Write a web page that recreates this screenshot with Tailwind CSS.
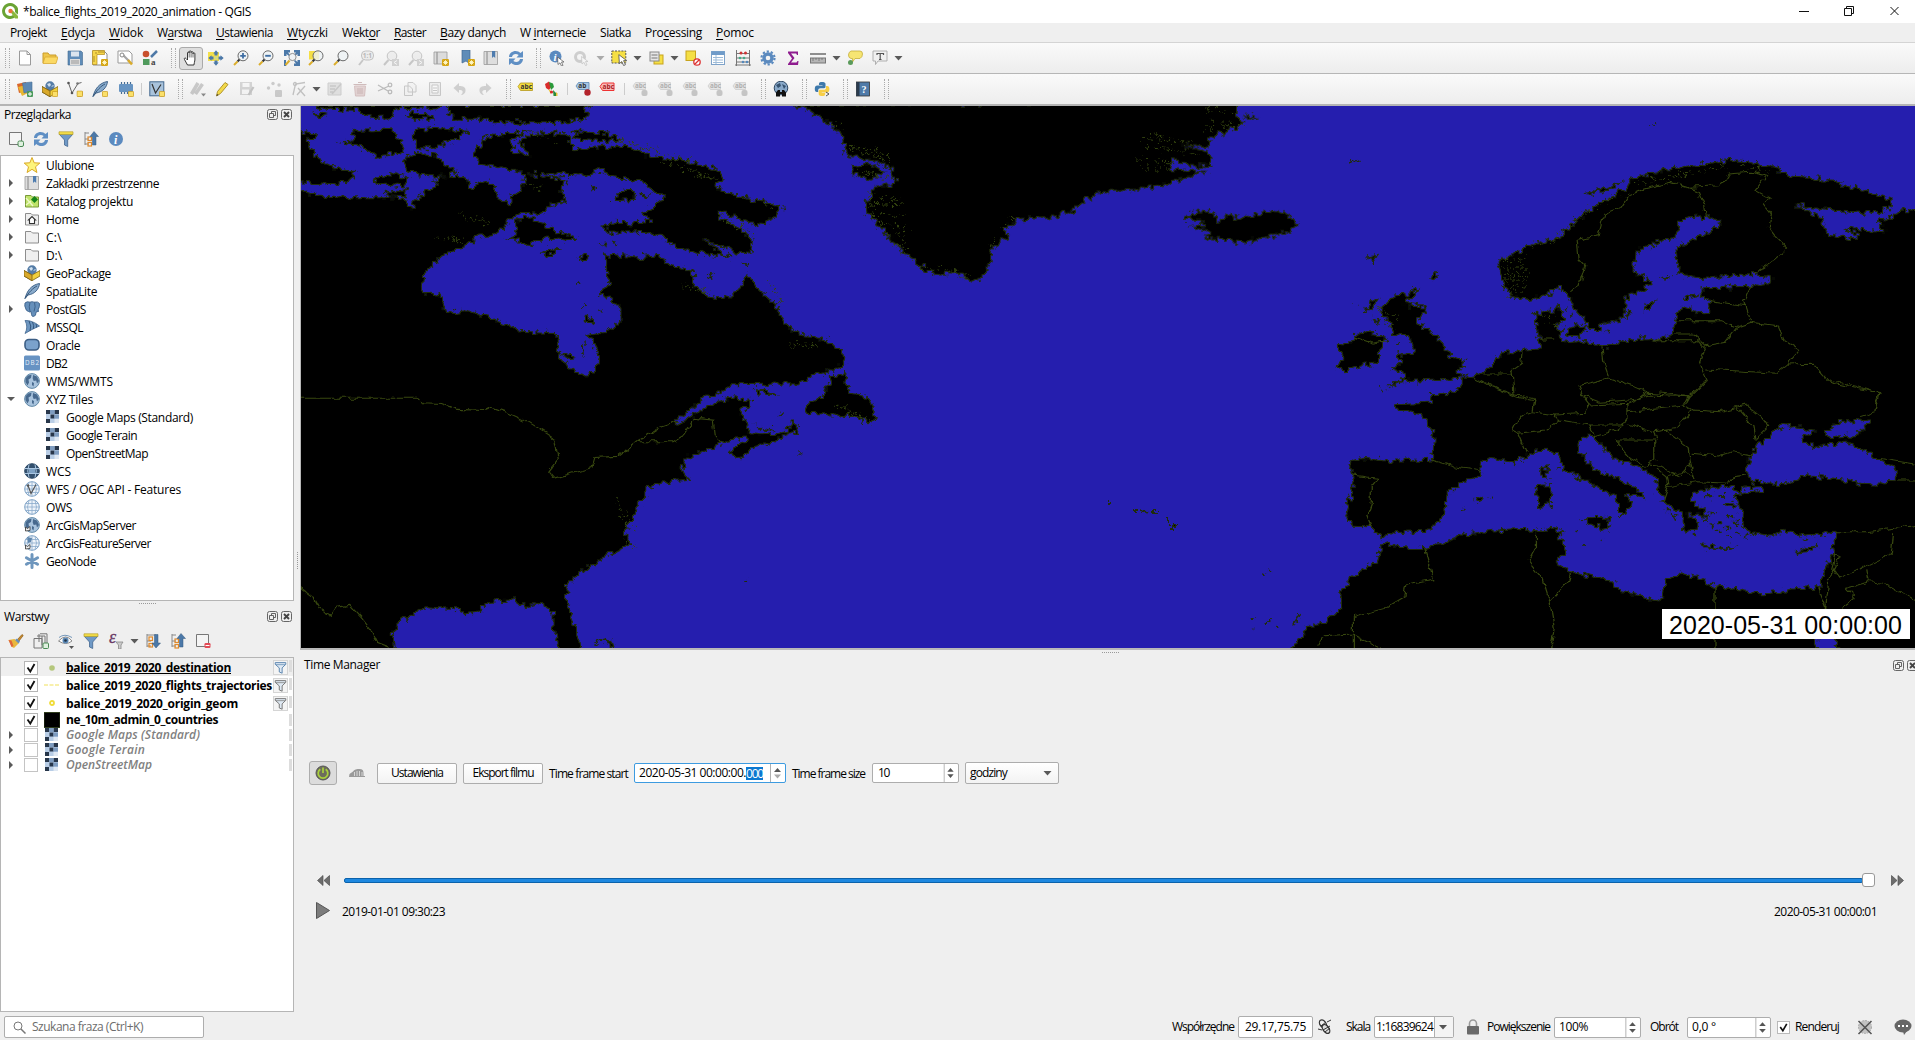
<!DOCTYPE html>
<html lang="pl">
<head>
<meta charset="utf-8">
<title>*balice_flights_2019_2020_animation - QGIS</title>
<script src="https://cdn.jsdelivr.net/npm/@tailwindcss/browser@4"></script>
</head>
<body class="w-[1915px] h-[1040px] overflow-hidden bg-[#efefef] text-black text-[12px] leading-4 font-['Open_Sans','Noto_Sans',sans-serif]">
<svg class="hidden">
<defs>
<symbol id="star" viewBox="0 0 6 6"><rect width="6" height="6" rx="1" fill="#d5a514"/><path d="M3 1v4M1 3h4M1.6 1.6l2.8 2.8M4.4 1.6L1.6 4.4" stroke="#fff8c8" stroke-width=".8"/></symbol>
<symbol id="sq" viewBox="0 0 6 6"><rect x=".4" y=".4" width="5.2" height="5.2" rx=".8" fill="#fbe06a" stroke="#c99a1c" stroke-width=".8"/></symbol>
<symbol id="new" viewBox="0 0 16 16"><path d="M2.500 1h7.500l3.500 3.500V15h-11z" fill="#fff" stroke="#9a9a9a"/><path d="M10 1v3.500h3.500" fill="none" stroke="#9a9a9a"/></symbol>
<symbol id="open" viewBox="0 0 16 16"><path d="M1 13V3h5l1.500 2H14v3" fill="#efc64a" stroke="#c99b2b"/><path d="M1 13.500L3 7h13l-2 6.500z" fill="#fbd964" stroke="#d9a934" stroke-width=".8"/></symbol>
<symbol id="save" viewBox="0 0 16 16"><path d="M1 1h13l1.500 1.500V15H1z" fill="#5f8cb8" stroke="#42688f" stroke-width=".6"/><rect x="4" y="1.500" width="8" height="5" fill="#dbe4ee"/><rect x="3" y="9" width="10" height="6" fill="#dcdcdc"/><path d="M4 11h8M4 13h8" stroke="#999"/></symbol>
<symbol id="layout" viewBox="0 0 16 16"><path d="M1 1h11l3 3v11H1z" fill="#fff" stroke="#888"/><path d="M.5.5h12v4H5v10H.5z" fill="#f6d64a" stroke="#b08b1d" stroke-width=".7"/><path d="M3 3h2M7 1v2M9 1v2M11 1v2M1 7h2M1 9h2M1 11h2" stroke="#8f701a" stroke-width=".7"/><use href="#star" x="9" y="9" width="7" height="7"/></symbol>
<symbol id="layman" viewBox="0 0 16 16"><path d="M1 1h11l3 3v9H1z" fill="#fff" stroke="#999"/><path d="M5 4l7 7" stroke="#a5a5a5" stroke-width="2.200"/><circle cx="5" cy="5" r="2" fill="#fff" stroke="#888"/><path d="M11 10l4 4.500" stroke="#d9aa29" stroke-width="2.600"/></symbol>
<symbol id="style" viewBox="0 0 16 16"><circle cx="4" cy="4" r="3.300" fill="#c8502d"/><rect x="1" y="9" width="6.500" height="6" fill="#4f9a5c"/><path d="M9 7l6-6" stroke="#4e79a7" stroke-width="2.500"/><text x="9" y="15" font-size="9" font-weight="700" font-family="Liberation Serif" fill="#444">a</text></symbol>
<symbol id="hand" viewBox="0 0 16 16"><path d="M4.500 15L1.500 9.500c-.8-1.500.8-2 1.500-1L4.500 10V3c0-1.300 1.700-1.300 1.700 0V1.800c0-1.300 1.900-1.300 1.900 0V2.500c0-1.200 1.900-1.200 1.900 0v1.200c0-1.200 1.900-1.200 1.900 0V10c0 2-1 3-1 5z" fill="#fff" stroke="#222" stroke-width=".9"/><path d="M6.200 3v4.500M8.100 2v5.500M10 3v4.500" stroke="#333" stroke-width=".7"/></symbol>
<symbol id="pansel" viewBox="0 0 16 16"><path d="M0 2h11v9H0z" fill="#f4e04a"/><path d="M8 .3l2.700 3.200h-1.200v2h-3v-2H5.300zM8 15.700l2.700-3.200h-1.200v-2h-3v2H5.300zM.3 8l3.200-2.700v1.200h2v3h-2v1.200zM15.700 8l-3.200-2.700v1.200h-2v3h2v1.200z" fill="#4b78a8"/><circle cx="8" cy="8" r="1.800" fill="#cfd98a"/></symbol>
<symbol id="lens" viewBox="0 0 16 16"><circle cx="10" cy="5.800" r="5" fill="#eef2f5" fill-opacity=".8" stroke="#6a6a6a"/><path d="M6.500 9.500l-2 2" stroke="#333" stroke-width="2"/><path d="M4.500 11.500L1 15" stroke="#dcae2c" stroke-width="2"/></symbol>
<symbol id="zin" viewBox="0 0 16 16"><use href="#lens"/><path d="M10 3v5.600M7.200 5.800h5.600" stroke="#3f6ea3" stroke-width="1.800"/></symbol>
<symbol id="zout" viewBox="0 0 16 16"><use href="#lens"/><path d="M7.200 5.800h5.600" stroke="#3f6ea3" stroke-width="1.900"/></symbol>
<symbol id="zfull" viewBox="0 0 16 16"><path d="M1 0h5v2.500H4L6 5 5 6 2.500 4v2H0V0zM15 0h-5v2.500h2L10 5l1 1 2.500-2v2H16V0zM16 16h-6v-2.500h2L10 11l1-1 2.500 2v-2H16zM0 16v-6h2v6z" fill="#4b78a8"/><circle cx="8.500" cy="7" r="3.600" fill="#eef2f5" fill-opacity=".9" stroke="#777" stroke-width=".8"/><path d="M5.500 10.500L1.500 15" stroke="#dcae2c" stroke-width="2"/></symbol>
<symbol id="zsel" viewBox="0 0 16 16"><rect x="1" y="1" width="10" height="8.500" fill="#f5df45"/><use href="#lens"/></symbol>
<symbol id="z11" viewBox="0 0 16 16"><g opacity=".35"><rect x="3.500" y="1" width="12" height="9" rx="4" fill="#ddd" stroke="#666"/><path d="M5 10l-4 5" stroke="#777" stroke-width="2"/><text x="4.800" y="8" font-size="6.500" font-weight="700" fill="#444">1:1</text></g></symbol>
<symbol id="zprev" viewBox="0 0 16 16"><g opacity=".3"><circle cx="9" cy="6" r="4.800" fill="#ddd" stroke="#555"/><path d="M5.500 10L1 15" stroke="#666" stroke-width="2"/><rect x="9" y="9" width="7" height="7" fill="#888"/><path d="M14 10.500l-3 2 3 2" fill="none" stroke="#fff"/></g></symbol>
<symbol id="znext" viewBox="0 0 16 16"><g opacity=".3"><circle cx="9" cy="6" r="4.800" fill="#ddd" stroke="#555"/><path d="M5.500 10L1 15" stroke="#666" stroke-width="2"/><rect x="9" y="9" width="7" height="7" fill="#888"/><path d="M11 10.500l3 2-3 2" fill="none" stroke="#fff"/></g></symbol>
<symbol id="newmap" viewBox="0 0 16 16"><path d="M1 2h3v12H1zM4 2h10v12H4z" fill="#dcdcdc" stroke="#999" stroke-width=".8"/><use href="#star" x="9" y="9" width="7" height="7"/></symbol>
<symbol id="newbm" viewBox="0 0 16 16"><path d="M3 0h8v14l-4-3-4 2z" fill="#5f8cb8" stroke="#42688f" stroke-width=".7"/><use href="#star" x="9" y="9" width="7" height="7"/></symbol>
<symbol id="bm" viewBox="0 0 16 16"><path d="M1 1.500h3v13H1zM4 1.500h10.500v13H4z" fill="#dedede" stroke="#9a9a9a" stroke-width=".8"/><path d="M9 1h3.200v7l-1.600-1.500L9 8z" fill="#4e7caf"/></symbol>
<symbol id="refresh" viewBox="0 0 16 16"><path d="M1 7c0-6 8-8 11.500-4L15 1v6.500H8.500L10.700 5C8 3 4.500 4 4 7z" fill="#5f8fc4"/><path d="M15 9c0 6-8 8-11.500 4L1 15V8.500h6.500L5.300 11c2.700 2 6.200 1 6.700-2z" fill="#5f8fc4"/></symbol>
<symbol id="cur" viewBox="0 0 8 10"><path d="M.5.5l6.500 5H4.500L6 9l-1.500.6L3 6.300 1 8z" fill="#fff" stroke="#555" stroke-width=".7"/></symbol>
<symbol id="info" viewBox="0 0 16 16"><circle cx="8" cy="8" r="7" fill="#5b8abf"/><text x="6" y="12.500" font-size="12" font-style="italic" font-weight="700" font-family="Liberation Serif" fill="#fff">i</text></symbol>
<symbol id="ident" viewBox="0 0 16 16"><circle cx="6.500" cy="6.500" r="6" fill="#5b8abf"/><text x="4.500" y="10.500" font-size="11" font-style="italic" font-weight="700" font-family="Liberation Serif" fill="#fff">i</text><use href="#cur" x="8" y="6.500" width="8" height="10"/></symbol>
<symbol id="gear" viewBox="0 0 16 16"><circle cx="8" cy="8" r="4" fill="none" stroke="#5b8abf" stroke-width="3.400"/><circle cx="8" cy="8" r="6.500" fill="none" stroke="#5b8abf" stroke-width="2.200" stroke-dasharray="2.200 1.880"/></symbol>
<symbol id="action" viewBox="0 0 16 16"><g opacity=".3"><circle cx="7" cy="7" r="4.500" fill="none" stroke="#777" stroke-width="3"/><use href="#cur" x="8" y="6" width="8" height="10"/></g></symbol>
<symbol id="select" viewBox="0 0 16 16"><rect x=".8" y="1" width="14" height="12" fill="#f5df45" stroke="#555" stroke-dasharray="2 1.200"/><use href="#cur" x="7" y="4" width="10" height="12"/></symbol>
<symbol id="selval" viewBox="0 0 16 16"><rect x="6" y="5" width="9" height="9" fill="#f5df45" stroke="#c7a31d"/><rect x="2" y="2" width="9" height="9" fill="#e6e6e6" stroke="#888"/><path d="M3.500 5h6M3.500 8h6" stroke="#777"/></symbol>
<symbol id="desel" viewBox="0 0 16 16"><rect x="1" y="1" width="9.500" height="9.500" fill="#f5df45" stroke="#c7a31d"/><circle cx="12" cy="12" r="3.200" fill="#fff" stroke="#d33" stroke-width="1.300"/><path d="M10 14l4-4" stroke="#d33" stroke-width="1.200"/></symbol>
<symbol id="table" viewBox="0 0 16 16"><rect x="1.500" y="1.500" width="13" height="13" fill="#fff" stroke="#7fa3c9"/><rect x="1.500" y="1.500" width="13" height="3.500" fill="#6f9bc9"/><path d="M3 7.500h10M3 10h10M3 12.500h10M6 5v9" stroke="#9dbbd8"/></symbol>
<symbol id="abacus" viewBox="0 0 16 16"><path d="M1.500 0v16M14.500 0v16M0 15h16M1 3.500h14M1 8h14M1 12h14" stroke="#777"/><circle cx="6" cy="3" r="1.500" fill="#c33"/><circle cx="10.500" cy="3" r="1.500" fill="#c33"/><circle cx="5" cy="8" r="1.300" fill="#4a8"/><circle cx="9" cy="8" r="1.300" fill="#4a8"/><circle cx="8" cy="12" r="1.300" fill="#58b"/><circle cx="12" cy="12" r="1.300" fill="#58b"/></symbol>
<symbol id="sigma" viewBox="0 0 16 16"><path d="M3 1.500h10V5h-1l-.8-1.500H6L9.500 8 6 12.500h5.500L12.500 11h1l-.5 4H3v-1l4-5.500-4-5.500z" fill="#8e1c8e"/></symbol>
<symbol id="measure" viewBox="0 0 16 16"><path d="M0 4h16" stroke="#555" stroke-width="1.300"/><rect x=".5" y="8" width="15" height="5" fill="#b5b5b5" stroke="#777"/><path d="M3 8v3M6 8v2M9 8v3M12 8v2" stroke="#666" stroke-width=".7"/></symbol>
<symbol id="tips" viewBox="0 0 16 16"><path d="M4 1h9q2.500 0 2.500 3T13 8.500H8L5.500 12V8.500H4Q1.500 8 1.500 5T4 1z" fill="#f6e573" stroke="#c5ae3b" stroke-width=".8"/><circle cx="3.500" cy="12.500" r="2.500" fill="#5a9a5a"/></symbol>
<symbol id="textann" viewBox="0 0 16 16"><path d="M1 1h14v10H6l-2.500 3.500V11H1z" fill="#f0f0f0" stroke="#a8a8a8" stroke-width=".9"/><path d="M5 3.500h6.500M8.200 3.500V9.500M7 9.500h2.500M5 3v2M11.500 3v2" stroke="#555" stroke-width="1.200"/></symbol>
<symbol id="dsm" viewBox="0 0 16 16"><path d="M0 3l9-2 1 9-8 2z" fill="#d9672b"/><path d="M1 6l8-2 2 8-6 3z" fill="#e9b730"/><path d="M5.500 2L15 1v9l-8 2z" fill="#5c88b4" stroke="#476e96" stroke-width=".6"/><rect x="10" y="10" width="6" height="6" rx="1" fill="#4b9a5c"/><path d="M13 11v4M11 13h4" stroke="#fff"/></symbol>
<symbol id="gpkg" viewBox="0 0 16 16"><circle cx="8" cy="5" r="4.700" fill="#547ca6"/><path d="M5 3l3-1 1 2-2 2zM9 6l2-2 1 1z" fill="#cfe0ef"/><path d="M0 5.500l8 4.500 8-4.500V11l-8 4.700L0 11z" fill="#f1cf3b" stroke="#7b6117" stroke-width=".8"/><path d="M0 5.500l8 4.500v5.700L0 11z" fill="#d9a92a" stroke="#7b6117" stroke-width=".8"/></symbol>
<symbol id="ngpkg" viewBox="0 0 16 16"><use href="#gpkg"/><use href="#sq" x="10" y="10" width="6" height="6"/></symbol>
<symbol id="nshp" viewBox="0 0 16 16"><path d="M1.500 2L5 12 11 2.500 14.500 1.500" fill="none" stroke="#666"/><circle cx="1.500" cy="2" r="1.300" fill="#555"/><circle cx="5" cy="12" r="1.300" fill="#555"/><circle cx="10.500" cy="2.500" r="1.300" fill="#777"/><use href="#sq" x="9.500" y="9.500" width="6.500" height="6.500"/></symbol>
<symbol id="feather" viewBox="0 0 16 16"><path d="M1 15.500C3 8 7 2 15.500.5 15 6 11 11 4 12z" fill="#88aacb" stroke="#41648a" stroke-width="1"/><path d="M1 15.500C5 9 9 5 13 3" fill="none" stroke="#2e4f72" stroke-width=".9"/></symbol>
<symbol id="nfeather" viewBox="0 0 16 16"><use href="#feather"/><use href="#sq" x="10" y="10" width="6" height="6"/></symbol>
<symbol id="chip" viewBox="0 0 16 16"><path d="M3.500 1v12M6.500 1v12M9.500 1v12M12.500 1v12" stroke="#456c93" stroke-width="1.200"/><rect x="1" y="3" width="14" height="8" rx="1" fill="#6794c2"/><use href="#sq" x="10" y="10" width="6" height="6"/></symbol>
<symbol id="virt" viewBox="0 0 16 16"><rect x=".8" y=".8" width="14" height="14" fill="#a9c3dc" stroke="#44698f"/><path d="M3 3l3.500 9L12 3.500" fill="none" stroke="#333" stroke-width="1.200"/><use href="#sq" x="10" y="10" width="6" height="6"/></symbol>
<symbol id="edits" viewBox="0 0 16 16"><g opacity=".35" stroke="#777" stroke-width="3.500"><path d="M1.500 13L8 2M5.500 13l7-10"/></g><path d="M11 12.500h5l-2.500 3z" fill="#888"/></symbol>
<symbol id="pencil" viewBox="0 0 16 16"><path d="M2.500 15l1-4.500L11 1.500l3 2-7.500 9z" fill="#f2d94a" stroke="#a98b24" stroke-width=".9"/><path d="M2.500 15l.5-2 1.500 1z" fill="#333"/></symbol>
<symbol id="gsave" viewBox="0 0 16 16"><g opacity=".3"><path d="M1 1h12v13H1z" fill="#888"/><path d="M3.500 2h7v4h-7zM3 8.500h7V13H3z" fill="#f4f4f4"/><path d="M9.500 14l5-8" stroke="#555" stroke-width="2.200"/></g></symbol>
<symbol id="gpts" viewBox="0 0 16 16"><g opacity=".33" fill="#777"><circle cx="2.500" cy="7" r="1.700"/><circle cx="7" cy="2.500" r="1.700"/><circle cx="13" cy="4" r="1.700"/><rect x="9" y="9" width="7" height="7" rx="1"/></g></symbol>
<symbol id="gvert" viewBox="0 0 16 16"><g opacity=".4" stroke="#777" stroke-width="1.300" fill="none"><path d="M2 14L4.500 3 14 1.500M6 14l8-9M7 7l7 8"/><circle cx="4" cy="3" r="1.500"/></g></symbol>
<symbol id="gattr" viewBox="0 0 16 16"><g opacity=".35"><path d="M1 2h13v12H1z" fill="#bbb" stroke="#888"/><path d="M5 13L14 3M3 5h6M3 8h5M3 11h3" stroke="#777" stroke-width="1.500"/></g></symbol>
<symbol id="gdel" viewBox="0 0 16 16"><g opacity=".4"><path d="M2.500 5h11l-1 10h-9z" fill="#c9a2a2" stroke="#a77"/><path d="M1.500 3.500h13M6 1.500h4M6 7v6M8 7v6M10 7v6" stroke="#966" stroke-width="1.200"/></g></symbol>
<symbol id="cut" viewBox="0 0 16 16"><g opacity=".35" stroke="#555" fill="none" stroke-width="1.300"><path d="M1 4l10 6M1 10l11-5"/><circle cx="13" cy="4" r="1.800"/><circle cx="13" cy="11" r="1.800"/></g></symbol>
<symbol id="copy" viewBox="0 0 16 16"><g opacity=".35" stroke="#777" fill="#eee"><path d="M6 1.500h5l3 3V11H6zM2.500 5h5l3 3v6.500h-8z"/></g></symbol>
<symbol id="paste" viewBox="0 0 16 16"><g opacity=".35" stroke="#777" fill="#ddd"><path d="M2.500 1.500h11v13h-11z"/><path d="M5 4h6v8H5zM6 7h4M6 9.500h4" fill="#fff"/></g></symbol>
<symbol id="undo" viewBox="0 0 16 16"><path d="M7 2v3c4 0 7 1 6.500 5-.2 2-2 4-4.500 4 3-3 2-5-2-5v3L1.500 7z" fill="#aaa" opacity=".5"/></symbol>
<symbol id="redo" viewBox="0 0 16 16"><use href="#undo" transform="matrix(-1 0 0 1 16 0)"/></symbol>
<symbol id="lab" viewBox="0 0 16 16"><g transform="translate(0 -2)"><path d="M1 7.500L3.500 4H15.500v7.500h-12z" fill="#f4dc3f" stroke="#b5981c" stroke-width=".8"/><text x="3.600" y="9.900" font-size="6.500" font-weight="700" fill="#333">abc</text></g></symbol>
<symbol id="diag" viewBox="0 0 16 16"><path d="M2 3l4-2.500L9 5l-3 4-3-2z" fill="#d92b2b"/><path d="M6 1l4 1.500 1 3.500-3 3z" fill="#2a9a3a"/><path d="M5 8l3 2v3z" fill="#f0c52f"/><circle cx="8.500" cy="11" r="1.600" fill="#d92b2b"/><path d="M10 9l3 3v3h-2.500z" fill="#2a8a3a"/><path d="M13 11l1.500 1.500V15H13z" fill="#e9c23a"/></symbol>
<symbol id="labp" viewBox="0 0 16 16"><path d="M1 5L3.500 1.500H14v7H3.500z" fill="#a8c6e4" stroke="#5b86b3" stroke-width=".8"/><text x="3.300" y="7.300" font-size="6.500" font-weight="700" fill="#333">ab</text><circle cx="12.500" cy="11.500" r="3.200" fill="#b3232b"/></symbol>
<symbol id="labr" viewBox="0 0 16 16"><g transform="translate(0 -2)"><path d="M1 7.500L3.500 4H15v7.500h-11.500z" fill="#f8b8b8" stroke="#e33" stroke-width="1"/><text x="3.600" y="9.900" font-size="6.500" font-weight="700" fill="#a22">abc</text></g></symbol>
<symbol id="labg" viewBox="0 0 16 16"><g opacity=".36"><path d="M1 5L3.500 1.500H13.500v7H3.500z" fill="#ccc" stroke="#888" stroke-width=".8"/><text x="3" y="7.300" font-size="6.300" font-weight="700" fill="#333">abc</text><rect x="9.500" y="9" width="6" height="6" rx="2" fill="#777"/></g></symbol>
<symbol id="globe" viewBox="0 0 16 16"><circle cx="8" cy="8" r="7.400" fill="#a9c4de" stroke="#57809f" stroke-width=".9"/><path d="M1.500 5.500L4 2.500l3.500-.8L7 5l-2.500 1.500L5 9.500l-1.500 3L1.500 9zM9 2l4 1.500L15 8l-2 2.500-.8-3-2.500.5-1-2.500zM8 9l2 1-.5 3.500L8 12z" fill="#47698e"/></symbol>
<symbol id="gwire" viewBox="0 0 16 16"><circle cx="8" cy="8" r="7.300" fill="#eef4fa" stroke="#7a9fc4"/><path d="M1 8h14M2 4.500h12M2 11.500h12M8 1v14M5 1.500q-3 6.500 0 13M11 1.500q3 6.500 0 13" fill="none" stroke="#8aabcc" stroke-width=".8"/></symbol>
<symbol id="gdark" viewBox="0 0 16 16"><circle cx="8" cy="8" r="7.300" fill="#33506e" stroke="#2e4a66"/><path d="M1 5.500h14M1 10.500h14M5 1.500q-2.500 6.500 0 13M11 1.500q2.500 6.500 0 13" fill="none" stroke="#a9c6e2" stroke-width="1"/><rect x="5" y="6" width="6" height="4" fill="#7fa3c6"/></symbol>
<symbol id="gwfs" viewBox="0 0 16 16"><use href="#gwire"/><path d="M4 4.500l3 8L12 3.500" fill="none" stroke="#555" stroke-width="1.200"/><circle cx="4" cy="4.500" r="1.200" fill="#555"/></symbol>
<symbol id="garc" viewBox="0 0 16 16"><use href="#globe"/><path d="M1.500 14v-4l2 1.500L6 9.500v4z" fill="#eee" stroke="#333" stroke-width=".8"/></symbol>
<symbol id="garcf" viewBox="0 0 16 16"><use href="#gwire"/><path d="M3 2l5 1-1 4-3 1z" fill="#5f86ad"/><path d="M1.500 14v-4l2 1.500L6 9.500v4z" fill="#eee" stroke="#333" stroke-width=".8"/></symbol>
<symbol id="metas" viewBox="0 0 16 16"><circle cx="8" cy="7" r="6.800" fill="#89a9c9" stroke="#2e4863" stroke-width="1"/><path d="M3 4l4-2 1 3-3 2zM9 3l4 2-2 3z" fill="#35526f"/><path d="M3 15.500v-4l2-2.500h2v2h2V9h2l2 2.500v4H9V13H7v2.500z" fill="#111"/></symbol>
<symbol id="py" viewBox="0 0 16 16"><path d="M8 1C4.500 1 5 2.500 5 4h3.500v.6H3C1 4.600.8 7 .8 8s.2 3 2.200 3h1.200V9.500C4.200 8 5 7.300 6.500 7.300H10c1 0 1.500-.7 1.500-1.700V3C11.500 1.500 10 1 8 1z" fill="#3d78ab"/><path d="M8.200 15c3.500 0 3-1.500 3-3H7.700v-.6h5.500c2 0 2.200-2.400 2.200-3.400s-.2-3-2.200-3H12v1.700c0 1.500-.8 2-2.300 2H6.200c-1 0-1.500.7-1.500 1.700V13c0 1.500 1.500 2 3.500 2z" fill="#f7ce46"/><path d="M12 11l3 2-3 2" fill="none" stroke="#555"/></symbol>
<symbol id="help" viewBox="0 0 16 16"><rect x="1.500" y="1" width="13" height="14" fill="#4f7aa8" stroke="#333" stroke-width=".8"/><rect x="1.500" y="1" width="3" height="14" fill="#2a3b4d"/><text x="6.500" y="12" font-size="10" font-weight="700" font-family="Liberation Serif" fill="#fff">?</text></symbol>
<symbol id="addl" viewBox="0 0 16 16"><path d="M1.500 1.500h12v12h-12z" fill="#f4f4f4" stroke="#777"/><rect x="10" y="10" width="5.500" height="5.500" rx="1.500" fill="#dff0df" stroke="#4a8a55"/></symbol>
<symbol id="funnel" viewBox="0 0 16 16"><path d="M1 3h14L9.700 9v6.500l-3.200-1.500V9z" fill="#6f99c6" stroke="#42678f" stroke-width=".8"/><path d="M1 .8h14v2.600H1z" fill="#f5e04a" stroke="#b9a02a" stroke-width=".7"/></symbol>
<symbol id="fout" viewBox="0 0 16 16"><path d="M1.500 2h13v2L10 8.500V15l-3.500-1.500v-5L1.500 4z" fill="#dfe9f3" stroke="currentColor" stroke-width="1.200"/><path d="M2 4.500h12" stroke="currentColor" stroke-width=".9"/></symbol>
<symbol id="coll" viewBox="0 0 16 16"><path d="M2 1v13M2 2h4M2 8h4M2 13h4" stroke="#888"/><rect x="5" y="6" width="3.500" height="3.500" fill="none" stroke="#e08a2c" stroke-width="1.200"/><rect x="5" y="11.500" width="3.500" height="3.500" fill="none" stroke="#e08a2c" stroke-width="1.200"/><path d="M11 .5l4.500 5H13V14H9.500V5.500H7z" fill="#4b78a8" stroke="#34597f" stroke-width=".5"/></symbol>
<symbol id="exp" viewBox="0 0 16 16"><path d="M2 1v13M2 2h9M2 8h4M2 13h4" stroke="#888"/><rect x="4" y="4" width="3.500" height="3.500" fill="none" stroke="#e08a2c" stroke-width="1.200"/><rect x="4" y="10.500" width="3.500" height="3.500" fill="none" stroke="#e08a2c" stroke-width="1.200"/><path d="M11 15l4.500-5H13V1.500H9.500V10H7z" fill="#4b78a8" stroke="#34597f" stroke-width=".5"/></symbol>
<symbol id="fav" viewBox="0 0 16 16"><path d="M8 .5l2.200 5.300 5.600.3-4.300 3.700 1.400 5.700L8 12.300l-4.900 3.200 1.400-5.700L.2 6.100l5.600-.3z" fill="#fdf47a" stroke="#d9a827" stroke-width="1"/></symbol>
<symbol id="folder" viewBox="0 0 16 16"><path d="M1.500 14V2.500H7L8.500 4h6V14z" fill="#efefef" stroke="#8d8d8d"/></symbol>
<symbol id="proj" viewBox="0 0 16 16"><path d="M1.500 14V2.500H7L8.500 4h6V14z" fill="#bfe36a" stroke="#7a9a3a"/><path d="M2 5l7 8M2 12l5-4" stroke="#eef9c8" stroke-width="1.300"/><path d="M7 6.500L10.500 3 14 6.500 10.500 10z" fill="#17841b"/></symbol>
<symbol id="home" viewBox="0 0 16 16"><use href="#folder"/><path d="M4.500 9L8 5.500 11.500 9H10.500v3.500h-5V9z" fill="#fff" stroke="#333" stroke-width="1.100"/></symbol>
<symbol id="pg" viewBox="0 0 16 16"><path d="M1 2q2-2 5-.8Q8 .2 10 1.200q4-1 5.500 1.300.5 3-1.700 7l1.200.5-3 1.200-.5 3Q8 17 7.500 13.500L7 10.500q-2 1-2.500 0Q2 10.500.8 5z" fill="#6690bb" stroke="#3c618a" stroke-width=".9"/><path d="M6 1.500q-1.500 4 0 9M10.500 1.500q1.500 4-.5 9" fill="none" stroke="#33577f" stroke-width=".8"/></symbol>
<symbol id="ms" viewBox="0 0 16 16"><path d="M1 1.500Q8 1 15.500 7 12 8.500 8 10.500L1 14.500Q4.500 8 1 1.500z" fill="#6d96c0" stroke="#416791" stroke-width=".8"/><path d="M5 2q3 5 1 10M8.500 3q2 4 .8 7M12 5q1 2 .3 3.500" fill="none" stroke="#33577f"/></symbol>
<symbol id="ora" viewBox="0 0 16 16"><rect x="1" y="2.500" width="14" height="10.500" rx="4" fill="#7ba2cc" stroke="#3c5e85" stroke-width="1.600"/></symbol>
<symbol id="db2" viewBox="0 0 16 16"><rect width="16" height="15" y=".5" rx="1.500" fill="#6793c3"/><text x="1" y="10" font-size="6.300" textLength="14" fill="#e6eef7">DB2</text></symbol>
<symbol id="tile" viewBox="0 0 16 16"><rect x="1" y="1" width="13" height="13" fill="#b8cde6"/><path d="M1 1h4v4H1zM9.500 1H14v4H9.500zM5.500 5.500h4v4h-4zM1 10h4v4H1z" fill="#27364a"/><path d="M5 1h4.500v4H5zM9.500 5.500H14v4H9.500z" fill="#7e9cc0"/><path d="M9.500 10H14v4H9.500z" fill="#dfe8f3"/></symbol>
<symbol id="node" viewBox="0 0 16 16"><path d="M8 1.500v13M2.400 4.700l11.200 6.600M13.600 4.700L2.400 11.300" stroke="#6e96bd" stroke-width="3" stroke-linecap="round"/></symbol>
<symbol id="brush" viewBox="0 0 16 16"><path d="M9.500 6.500L14 1.500l1.200 1L11 8z" fill="#c98b2b" stroke="#8a5a18" stroke-width=".7"/><path d="M.5 7l6-1 4.500 4-5 5-2-1z" fill="#e8b83d"/><path d="M.5 7l3 .5 2 5.500-2 1z" fill="#e0653a"/><path d="M9 5.500L12 8.500 10.500 10.500 7 7z" fill="#6890ba"/></symbol>
<symbol id="addg" viewBox="0 0 16 16"><path d="M1 5.500h8V15H1zM4 3h8v9M7 .8h7V10M6 1v8M9 3v9" fill="none" stroke="#777"/><rect x="10" y="10" width="5.500" height="5.500" rx="1" fill="#dff0df" stroke="#4a8a55"/></symbol>
<symbol id="eye" viewBox="0 0 16 16"><path d="M.5 8Q8 0 14 8 8 13 .5 8z" fill="#fff" stroke="#8b8b8b"/><circle cx="7.500" cy="7.500" r="3" fill="#5a87b5"/><circle cx="7.500" cy="7.500" r="1.300" fill="#1f3347"/><path d="M1 4.500q5.500-4.500 13 0" fill="none" stroke="#7799bb"/><path d="M11 13h5l-2.500 3z" fill="#555"/></symbol>
<symbol id="eps" viewBox="0 0 16 16"><text x="1" y="10" font-size="18" font-style="italic" font-family="Liberation Serif" fill="#6a3a66" stroke="#6a3a66" stroke-width=".3">ε</text><path d="M8 9h7l-2 3v4h-2.500v-4z" fill="#ccc" stroke="#888" stroke-width=".8"/></symbol>
<symbol id="rem" viewBox="0 0 16 16"><path d="M1.500 1.500h12v12h-12z" fill="#f4f4f4" stroke="#777"/><rect x="9.500" y="10" width="6" height="5" rx="1.200" fill="#e24b56"/><path d="M10.500 12.500h4" stroke="#fff"/></symbol>
<symbol id="dn" viewBox="0 0 16 16"><path d="M4.500 6h8L8.500 10.500z" fill="#5a5a5a"/></symbol>
<symbol id="dng" viewBox="0 0 16 16"><path d="M4.500 6h8L8.500 10.500z" fill="#aaa"/></symbol>
<symbol id="rt" viewBox="0 0 8 10"><path d="M2 1l4 4-4 4z" fill="#5a5a5a"/></symbol>
<symbol id="chk" viewBox="0 0 14 14"><rect x=".5" y=".5" width="13" height="13" fill="#fff" stroke="#b5b5b5"/><path d="M3.500 6.500l2.800 4L10.500 3" fill="none" stroke="#111" stroke-width="1.800"/></symbol>
<symbol id="unchk" viewBox="0 0 14 14"><rect x=".5" y=".5" width="13" height="13" fill="#fff" stroke="#c4c4c4"/></symbol>
<symbol id="float" viewBox="0 0 11 11"><rect x=".5" y=".5" width="10" height="10" rx="2" fill="none" stroke="#666"/><path d="M4.500 4.500v-2h4v4h-2M2.500 4.500h4v4h-4z" fill="none" stroke="#555" stroke-width=".9"/></symbol>
<symbol id="close" viewBox="0 0 11 11"><rect x=".5" y=".5" width="10" height="10" rx="2" fill="none" stroke="#666"/><path d="M3 3l5 5M8 3L3 8" stroke="#444" stroke-width="1.900"/></symbol>
<symbol id="spin" viewBox="0 0 15 20"><path d="M.5 0v20" stroke="#b0b0b0"/><path d="M4 8.500h7L7.500 4.500zM4 11.500h7l-3.500 4z" fill="#555"/></symbol>
</defs>
</svg>

<div class="flex flex-col w-[1915px] h-[1040px]">
  <header class="flex h-[23px] items-center bg-white pl-[2px]">
    <svg class="w-4 h-4 mt-[-1px]" viewBox="0 0 16 16"><path d="M8 0a8 8 0 105 14.300L11 12a5 5 0 112-4.500V9l2.500 2.500A8 8 0 008 0z" fill="#6aa334"/><path d="M7.500 7.500h3.300L16 13v2.500h-3z" fill="#8bb83c"/><circle cx="8.500" cy="8" r="2.200" fill="#e8743b"/></svg>
    <span data-w="228" class="ml-[5px] whitespace-pre">*balice_flights_2019_2020_animation - QGIS</span>
    <svg class="ml-auto mr-[14px] w-[106px] h-[20px]" viewBox="0 0 106 20" fill="none" stroke="#111"><path d="M4 9.500h10M49.500 6.500h7v7h-7zM51.500 6.500v-2h7v7h-2M95.500 5l8 8M103.500 5l-8 8"/></svg>
  </header>
  <nav id="menu" class="flex h-[20px] items-center border-b border-[#d4d4d4] whitespace-pre"></nav>
  <div id="tb1" class="flex h-[31px] items-center border-b border-[#b6b6b6] bg-linear-to-b from-[#fafafa] to-[#ededed]"></div>
  <div id="tb2" class="flex h-[32px] items-center border-b-2 border-[#b4b4b4] bg-linear-to-b from-[#fafafa] to-[#ededed] pb-px"></div>

  <div class="flex h-[908px]">
    <aside class="flex w-[294px] flex-col shrink-0">
      <div class="flex h-[19px] items-center pl-[4px] pr-[2px] pb-[2px] gap-[3px]"><span data-w="67" class="mr-auto whitespace-pre">Przeglądarka</span><svg class="w-[11px] h-[11px]"><use href="#float"/></svg><svg class="w-[11px] h-[11px]"><use href="#close"/></svg></div>
      <div class="flex h-[30px] items-center pb-[2px]" id="btb"></div>
      <div id="tree" class="h-[446px] border border-[#b5b5b5] bg-white"></div>
      <div class="h-[7px] flex justify-center items-start pt-[2px]"><div class="w-[17px] border-t border-dotted border-[#999]"></div></div>
      <div class="flex h-[19px] items-center pl-[4px] pr-[2px] pb-[2px] gap-[3px]"><span data-w="45" class="mr-auto whitespace-pre">Warstwy</span><svg class="w-[11px] h-[11px]"><use href="#float"/></svg><svg class="w-[11px] h-[11px]"><use href="#close"/></svg></div>
      <div class="flex h-[30px] items-center pb-[2px]" id="ltb"></div>
      <div id="layers" class="h-[355px] border border-[#b5b5b5] bg-white"></div>
    </aside>
    <div class="w-[6px] shrink-0 flex items-center justify-center"><div class="h-[17px] border-l border-dotted border-[#999]"></div></div>
    <main class="flex flex-col w-[1615px] shrink-0">
      <div class="relative h-[544px] border-l border-b-2 border-[#b9b9b9] overflow-hidden bg-[#251eae]">
        <svg class="block w-[1614px] h-[542px]" viewBox="301 106 1614 542">
          <defs>
            <filter id="coast" filterUnits="userSpaceOnUse" x="290" y="96" width="1640" height="570" color-interpolation-filters="sRGB">
              <feTurbulence type="fractalNoise" baseFrequency=".18" numOctaves="3" seed="4" result="n"/>
              <feDisplacementMap in="SourceGraphic" in2="n" scale="11" xChannelSelector="R" yChannelSelector="G" result="d"/>
              <feMorphology in="d" operator="erode" radius="1" result="e"/>
              <feFlood flood-color="#202c0c"/><feComposite in2="d" operator="in" result="f"/>
              <feMerge><feMergeNode in="f"/><feMergeNode in="e"/></feMerge>
            </filter>
            <filter id="wob" filterUnits="userSpaceOnUse" x="290" y="96" width="1640" height="570" color-interpolation-filters="sRGB">
              <feTurbulence type="fractalNoise" baseFrequency=".12" numOctaves="2" seed="9"/>
              <feDisplacementMap in="SourceGraphic" scale="7" xChannelSelector="R" yChannelSelector="G"/>
            </filter>
            <filter id="fjord" filterUnits="userSpaceOnUse" x="290" y="96" width="1640" height="570" color-interpolation-filters="sRGB">
              <feTurbulence type="fractalNoise" baseFrequency=".2" numOctaves="2" seed="2"/>
              <feDisplacementMap in="SourceGraphic" scale="16" xChannelSelector="R" yChannelSelector="G"/>
            </filter>
          </defs>
          <g filter="url(#coast)" fill="#000">
            <g transform="matrix(.38265 0 0 .34821 300 104)">
              <path d="M-20,245L50,260 130,268 250,268 280,275 290,298 305,270 355,235 350,215 400,205 440,215 445,245 465,225 490,220 515,245 520,270 545,285 560,262 580,235 585,200 640,205 700,215 695,235 680,250 700,280 650,295 640,320 600,310 580,310 545,335 535,355 500,380 460,385 430,415 390,425 355,455 325,490 320,540 365,545 385,600 430,592 490,605 530,630 590,655 672,658 675,715 705,755 735,778 770,770 780,740 765,680 745,665 800,655 835,625 835,590 815,560 778,548 810,510 800,480 800,450 790,428 880,438 930,432 980,465 1030,475 1030,520 1060,548 1095,558 1140,540 1170,487 1200,530 1240,570 1270,630 1310,660 1380,675 1420,710 1425,750 1385,770 1350,778 1305,805 1125,808 1095,835 1055,845 1020,880 985,915 985,922 1035,885 1080,858 1130,842 1180,850 1180,870 1150,880 1165,910 1175,950 1130,968 1100,975 1060,998 1010,1015 1000,1050 1020,1080 980,1082 905,1105 905,1130 880,1160 875,1190 850,1225 865,1265 820,1290 770,1320 720,1360 700,1385 697,1425 710,1470 730,1530 735,1600 690,1600 660,1500 660,1465 625,1432 590,1448 560,1425 490,1430 470,1460 430,1465 400,1450 330,1445 260,1490 245,1520 250,1600 -20,1600Z"/>
              <path d="M40,0H380L370,12 250,15 245,38 190,40 150,20 50,15ZM275,30L300,20 350,30 355,48 300,46ZM35,32L50,25 72,33 50,40ZM380,0H770L750,15 755,40 700,55 500,55 490,45 400,45Z"/>
              <path d="M-20,78L45,85 40,100 20,110 50,160 90,180 145,190 145,215 100,230 60,235-20,225ZM95,108L140,105 135,75 250,70 255,95 270,115 270,140 205,155 160,125ZM295,75L350,65 445,75 410,105 340,130 305,130 295,100ZM270,160L300,140 360,145 375,170 410,195 380,210 310,205 275,190ZM190,215L240,198 290,215 275,240 200,232ZM210,250L280,245 275,268 230,266Z"/>
              <path d="M600,78L520,85 480,95 455,140 470,170 540,190 600,200 740,205 780,190 810,205 850,220 890,225 950,270 895,315 915,335 870,340 820,338 790,350 800,370 880,368 930,375 980,410 1030,425 1135,445 1100,420 1050,390 1150,430 1180,425 1185,385 1140,350 1100,325 1090,310 1200,350 1240,330 1265,295 1200,275 1140,262 1085,235 1110,215 1090,185 1020,165 980,155 920,150 860,120 790,120 720,130 700,85 640,80 580,95 575,120 600,145 560,135 555,105ZM710,80L800,80 845,105 780,110 715,98Z"/>
              <path d="M565,330L600,320 650,355 730,385 690,395 640,385 590,408 560,390 535,392 565,370ZM627,432L650,415 685,418 660,437ZM730,442L745,428 758,440 742,456ZM815,265L850,245 878,255 875,275 820,280ZM780,400L805,398 800,410ZM815,395L832,398 820,403ZM1063,492L1075,484 1082,494 1070,501ZM1150,452L1168,455 1165,464ZM738,622L755,608 775,622 760,636ZM680,718L705,715 718,728 700,730ZM760,235L775,240 765,250ZM885,258L925,260 900,266ZM545,255L555,262 545,268Z"/>
              <path d="M1175,818L1225,822 1252,840 1215,838ZM1430,765L1390,780 1365,835 1325,865 1320,890 1400,892 1420,905 1440,895 1470,912 1500,915 1505,880 1480,835 1440,830 1425,800ZM1160,940L1240,950 1265,938 1290,908 1308,938 1240,970 1190,985 1148,1020 1125,1008 1130,985 1165,965ZM1178,910L1200,930 1245,935 1210,943ZM1245,900L1260,888 1255,900ZM1298,1003L1312,1003 1305,1008ZM1163,1362h8v7h-8zM768,1543L800,1533 822,1550 815,1562 800,1542 770,1548ZM722,512h8v8h-8zM740,580h7v6h-7zM782,590h7v6h-7zM738,690h6v30h-6z"/>
            </g>
            <g transform="matrix(.33333 0 0 .33333 820 104)">
              <path d="M-90,0L-50,15 0,42 65,90 75,155 130,165 210,190 225,240 165,245 135,300 140,330 200,400 270,460 320,505 410,512 455,535 480,530 515,470 515,440 565,400 560,370 600,348 680,345 760,320 805,285 845,265 940,260 1050,240 1165,200 1050,195 1060,165 1100,185 1180,190 1170,145 1080,120 1165,135 1170,100 1220,85 1280,55 1250,40 1250,-10ZM95,185L150,178 200,205 150,230 100,215ZM1265,35L1318,38 1290,46Z"/>
              <path d="M1087,350L1110,325 1150,318 1190,330 1195,350 1225,330 1260,340 1330,328 1350,318 1390,325 1440,355 1410,385 1330,405 1270,418 1220,412 1145,402 1175,392 1155,378 1100,370 1150,362 1140,350Z"/>
            </g>
            <g transform="matrix(.38265 0 0 .33333 1315 104)">
              <path d="M480,470L570,420 640,395 700,330 760,285 820,245 830,220 900,200 970,185 1080,168 1130,172 1220,190 1210,205 1290,220 1360,230 1440,260 1510,285 1505,315 1440,332 1370,322 1290,312 1255,298 1325,340 1335,385 1400,403 1418,395 1385,375 1400,365 1440,378 1488,382 1465,352 1520,325 1547,312 1600,320 1600,910 310,910 300,870 350,870 390,850 395,820 440,805 490,745 560,735 590,730 580,690 572,625 610,620 640,605 645,625 650,650 635,665 640,700 660,715 700,710 760,725 860,700 880,710 935,690 940,640 960,605 975,612 1010,628 1030,618 1025,590 1010,580 1010,550 1140,545 1190,535 1195,525 1150,512 1080,518 1010,525 950,512 945,470 942,430 1000,400 1055,365 1050,345 1000,340 950,355 945,400 900,415 850,440 835,470 835,505 880,530 875,550 820,575 815,610 800,650 750,660 745,678 710,678 700,640 675,610 655,560 640,550 600,580 560,592 510,580 495,550 480,490Z"/>
              <path d="M655,672L700,655 702,680 685,702 660,695ZM622,675L645,678 645,695 625,692ZM855,622L862,602 890,588 875,620ZM806,648L822,615 828,618 814,645ZM960,580L1005,565 1002,576 970,590ZM895,517L932,520 915,530ZM758,682L773,684 766,692ZM650,612h7v8h-7zM668,632h8v6h-8z"/>
              <path d="M205,575L270,560 250,585 235,600 295,605 270,655 300,680 330,710 355,755 390,765 392,790 370,805 385,820 340,828 230,835 185,852 240,810 200,795 225,775 215,745 260,740 245,700 200,690 190,650 165,640 175,610ZM60,715L100,715 105,690 140,680 190,700 170,740 170,780 110,790 75,805 50,790 75,765 60,740Z"/>
              <path d="M130,625L150,585 172,578 160,600 140,625ZM150,635L165,655 155,660ZM248,560L272,548 268,565ZM298,515L322,500 320,520 308,532 300,525ZM128,458L168,452 158,468 155,485 146,465ZM700,270L750,250 805,230 790,250 720,272ZM86,174L118,165 118,172 88,180ZM875,56L890,58 882,66ZM208,712L220,708 218,720ZM100,596h6v6h-6zM165,852h6v5h-6zM675,342h10v6h-10z"/>
            </g>
            <g transform="matrix(.44643 0 0 .33333 1215 380)">
              <path fill-rule="evenodd" d="M555,-10L555,15 530,35 480,45 480,65 400,70 410,92 460,105 485,150 490,190 485,240 380,238 330,230 298,245 308,290 305,340 292,380 305,440 345,442 372,475 400,460 470,455 500,430 520,385 520,345 545,315 595,290 598,245 620,237 670,250 735,208 770,230 780,270 830,305 880,340 905,370 905,412 935,375 925,345 965,355 950,330 910,295 850,265 818,215 820,175 845,168 865,200 905,245 950,265 985,290 990,340 1020,385 1045,400 1050,450 1075,460 1085,430 1060,405 1110,412 1070,360 1070,335 1150,320 1180,340 1160,350 1180,400 1180,440 1200,460 1250,470 1270,450 1320,475 1390,455 1385,510 1350,620 1300,625 1225,640 1120,615 1080,590 1040,578 1005,600 1000,655 985,660 910,630 890,600 800,575 765,545 790,520 770,470 785,450 760,440 730,445 640,450 560,460 470,505 405,500 390,482 375,490 360,545 300,590 280,640 285,680 240,730 205,740 160,830H1600V-10ZM1205,305L1190,265 1215,200 1275,137 1345,155 1310,175 1340,205 1410,185 1525,265 1525,300 1470,315 1400,295 1320,285 1280,310ZM1365,158L1400,130 1465,118 1440,165 1375,172ZM1178,325L1222,318 1225,330 1185,335ZM1340,775L1355,820H1410L1380,775Z"/>
              <path d="M1088,492L1130,500 1175,500 1150,510 1095,505ZM1300,515L1355,488 1330,520 1310,523ZM820,412L888,410 882,455 830,430ZM718,315L755,312 752,375 722,382ZM728,272L748,252 747,300 730,295ZM548,382L558,380 556,393ZM578,362L595,350 602,362 590,373ZM612,348L624,350 617,356ZM170,735L180,715 195,698 185,725ZM112,728L124,722 118,738ZM135,738L148,736 142,747ZM84,712h7v8h-7zM82,743h6v5h-6zM100,580L117,582 110,590ZM120,572h6v5h-6zM864,476L872,480 868,486ZM805,452h6v5h-6zM822,492h6v5h-6zM765,262h10v6h-10z"/>
              <path d="M1100,345h16v10h-16zM1130,345h14v6h-14zM1140,370h22v10h-22zM1085,380l18,12-8,4zM1110,395h12v8h-12zM1125,420h10v10h-10zM1145,405h16v7h-16zM1110,430h9v9h-9zM1140,440h12v7h-12zM1160,425h14v7h-14zM1125,455h10v7h-10zM1165,455h8v8h-8zM1180,470l20,-8-10,18zM1095,415h9v8h-9zM1150,468h8v6h-8zM1020,400l14,10-8,8zM1012,390h8v8h-8z"/>
            </g>
            <path d="M1107,501h4v3h-4zM1134,510h4v2h-4zM1142,509l6,2-5,2zM1152,511h5v2h-5zM1166,519h4v2h-4zM1172,524h4v4h-4z"/>
          </g>
          <g filter="url(#fjord)" fill="none" stroke="#34450f" stroke-width="1" stroke-dasharray="5 3">
            <path d="M832,120l14,12M846,146l30,4 20,14M850,150l40,8M860,172l32,8M868,196l32,4M868,204l34,2M872,212l34,4M880,224l28,4M884,234l24,4M892,244l20,4M900,252l16,8M920,266l38,4M962,276l14,0M990,246l10,-14M1000,230l14,-12M1140,138l60,6M1144,146l56,8M1136,160l40,2M1138,168l34,0M1206,110l34,2M1210,120l24,4M1206,128l40,-2M1150,134l20,6"/>
            <path d="M1502,262l26,-4M1504,268l24,0M1502,274l28,2M1504,280l22,0M1506,286l20,2M1508,292l14,0M1532,246l30,-8M1556,236l26,-16M1574,220l30,-20M1600,206l20,-14M1636,184l50,-10M1680,174l50,-8M1740,166l30,6M1540,312l16,6M1544,322l16,4M1378,308l20,10M1382,320l14,10"/>
            <path d="M620,140l40,12M640,146l50,16M660,160l50,16M690,172l30,8M740,196l36,10M716,212l30,20M730,222l24,14M530,134l30,10M520,180l20,10M460,216l30,8M434,238l30,2M680,286l30,6M770,282l12,20M790,344l30,2M836,404l30,14M850,414l20,6M616,500l10,26M620,504l14,24M624,540l14,8"/>
          </g>
          <g filter="url(#wob)" fill="none" stroke="#38480f" stroke-width="1.200">
              <g transform="matrix(.38265 0 0 .34821 300 104)" stroke-width="3">
                <path d="M-20,845H310L320,858 370,860 410,877 480,880 500,870 540,885 600,915 665,960 675,1020 650,1055 665,1075 760,1045 768,1015 830,1012 880,970 975,970 1005,950 1035,900 1080,905 1085,950 1105,975M880,970L940,930 990,912M-20,1375L35,1420 50,1450 80,1468 95,1445 130,1440 160,1475 185,1510 200,1545 235,1560"/>
              </g>
              <g transform="matrix(.38265 0 0 .33333 1315 104)" stroke-width="3">
                <path d="M670,560L690,545 705,485 690,465 685,410 740,395 755,330 800,310 820,275 860,255 930,235 1000,260 1015,300 1020,340M930,235L970,250 1060,245 1080,210 1140,205 1180,215 1150,260 1190,285 1170,300 1190,330 1185,370 1205,400 1235,435 1200,470 1150,505M1140,543L1120,590 1125,605 1140,655M1035,590L1125,605M940,650L1060,650 1100,670 1140,655 1210,665 1225,710 1265,740 1235,780 1205,808 1020,795M1100,670L1070,715 1020,725 985,690 935,690M880,710H1000L1020,735 1005,775 1025,830 980,880 970,900M1235,780L1300,778 1345,835 1400,850 1475,865 1465,900M750,730L755,780 768,822 690,845 700,875 745,895 850,885 870,865 830,845 768,822M870,865L930,870 980,880M545,735L540,780 515,800 520,870M440,810H515M415,820L460,850 530,880 575,890M105,700L150,718 180,712M590,705H625"/>
              </g>
              <g transform="matrix(.44643 0 0 .33333 1215 380)" stroke-width="2.800">
                <path d="M595,0L640,30 675,45 715,55 710,95 760,105 770,120 740,150 680,160 665,150 680,110 710,95M680,160L690,190 700,220M760,105L830,100 840,75 925,70 925,110 910,135 840,135 770,120M840,75L820,40M925,95L985,85 1050,75 1070,90 1035,145 985,155 920,130M925,70L970,45 1060,50 1050,75M1060,50L1100,0M840,135L850,170 900,150 915,135M900,180H985V240L965,260 930,235 900,190ZM1010,150L1060,200 1065,250 1040,290 1000,260 975,255M985,155L990,180M1070,220L1130,228 1160,215 1200,225M1070,90L1130,95 1190,75 1225,110 1240,140 1210,180 1205,140 1170,85M1015,320L1080,305 1150,310 1160,290 1190,285M990,270L1010,290 1015,320 1005,360M1015,290L1050,275 1075,295M1065,250L1075,300M485,240L540,262 595,272M308,285L365,295 350,320 350,370 340,405 350,440M470,505L490,600 430,615 425,650 380,685 310,710V830M310,765L245,770 230,800M310,765L375,808M720,450V500L702,545 735,600 750,665 760,740 750,820M800,575L795,600 750,665M1120,615V820M1350,625L1368,685M1390,525L1375,600 1368,685M1395,455L1460,455 1580,435M1390,525L1400,530 1385,570 1400,595 1515,520 1520,460M1460,565L1465,605 1415,625 1435,655 1405,685M1465,605L1500,610 1580,670M1375,0L1440,20 1490,40 1480,95 1445,110M1490,235L1580,255M1525,300H1580"/>
              </g>
          </g>
        </svg>
        <div class="absolute left-[1361px] top-[503px] w-[248px] h-[30px] bg-white pl-[7px] text-[25px] leading-[32px] whitespace-pre font-['Liberation_Sans',sans-serif]"><span data-w="233">2020-05-31 00:00:00</span></div>
      </div>
      <div class="h-[5px] flex justify-center items-start pt-[2px] pl-[6px]"><div class="w-[17px] border-t border-dotted border-[#999]"></div></div>
      <div class="flex h-[20px] items-center pl-[4px] gap-[3px]"><span data-w="76" class="whitespace-pre">Time Manager</span><svg class="ml-auto w-[11px] h-[11px]"><use href="#float"/></svg><svg class="w-[11px] h-[11px] -mr-[3px]"><use href="#close"/></svg></div>
      <div class="flex h-[24px] mt-[86px] items-center pl-[9px]">
        <div class="flex w-[28px] h-[24px] items-center justify-center rounded-[3px] border border-[#adadad] bg-[#dcdcdc]"><svg class="w-4 h-4" viewBox="0 0 16 16"><circle cx="8" cy="8" r="7" fill="#6d6d5c" stroke="#555"/><path d="M5.300 4.300a4.800 4.800 0 105.400 0M8 2.500V8" fill="none" stroke="#a9d13c" stroke-width="1.700"/></svg></div>
        <svg class="ml-[12px] w-[16px] h-4" viewBox="0 0 16 16"><path d="M0 12l.5-3L4 6.500C5 4.500 8 4 10.500 4c3 0 4 1.500 4 4v3H16v1z" fill="#9a9a9a"/><path d="M5.500 7v4M8 6v5M10.500 6v5M13 7v4" stroke="#d5d5d5"/></svg>
        <div class="ml-[12px] flex h-[21px] w-[80px] items-center justify-center rounded-[2px] border border-[#adadad] bg-linear-to-b from-white to-[#f3f3f3]"><span data-w="52">Ustawienia</span></div>
        <div class="ml-[6px] flex h-[21px] w-[80px] items-center justify-center rounded-[2px] border border-[#adadad] bg-linear-to-b from-white to-[#f3f3f3]"><span data-w="61" class="whitespace-pre">Eksport filmu</span></div>
        <span data-w="79" class="ml-[6px] pt-px whitespace-pre">Time frame start</span>
        <div class="ml-[6px] flex h-[20px] w-[152px] shrink-0 items-center rounded-[2px] border border-[#3d9be0] bg-white pl-[4px] whitespace-pre"><span data-w="107">2020-05-31 00:00:00.</span><span data-w="17" class="bg-[#0b78d0] text-white leading-[13px]">000</span><svg class="ml-auto w-[15px] h-[18px]" viewBox="0 0 15 18"><path d="M.5 0v18" stroke="#b0b0b0"/><path d="M4 8h7L7.500 4z" fill="#555"/><path d="M4 10.500h7l-3.500 4z" fill="#aaa"/></svg></div>
        <span data-w="73" class="ml-[6px] pt-px whitespace-pre">Time frame size</span>
        <div class="ml-[7px] flex h-[20px] w-[87px] items-center rounded-[2px] border border-[#adadad] bg-white pl-[5px]"><span data-w="11">10</span><svg class="ml-auto w-[15px] h-[18px]"><use href="#spin"/></svg></div>
        <div class="ml-[6px] flex h-[22px] w-[94px] items-center rounded-[2px] border border-[#adadad] bg-linear-to-b from-white to-[#f3f3f3] pl-[4px]"><span data-w="37">godziny</span><svg class="ml-auto mr-[3px] w-4 h-4"><use href="#dn"/></svg></div>
      </div>
      <div class="mt-[86px] flex h-[18px] items-center pl-[17px]">
        <svg class="w-[13px] h-[11px]" viewBox="0 0 13 11"><path d="M6 .5v10L.5 5.500zM12.500.5v10L7 5.500z" fill="#6d6d6d" stroke="#4d4d4d" stroke-width=".7"/></svg>
        <div class="ml-[14px] h-[5px] w-[1519px] rounded-[2px] border border-[#0b62ab] bg-[#1e88e0]"></div>
        <div class="-ml-[1px] h-[14px] w-[13px] rounded-[3px] border border-[#999] bg-white"></div>
        <svg class="ml-[16px] w-[13px] h-[11px]" viewBox="0 0 13 11"><path d="M.5.5v10L6 5.500zM7 .5v10l5.500-5z" fill="#6d6d6d" stroke="#4d4d4d" stroke-width=".7"/></svg>
      </div>
      <div class="mt-[13px] flex h-[18px] items-center pl-[16px]">
        <svg class="w-[14px] h-[17px] -mt-px" viewBox="0 0 14 17"><path d="M.5.5v16l13-8z" fill="#7c7c7c" stroke="#555"/></svg>
        <span data-w="103" class="ml-[12px] pt-[2px] whitespace-pre">2019-01-01 09:30:23</span>
        <span data-w="103" class="ml-auto mr-[38px] pt-[2px] whitespace-pre">2020-05-31 00:00:01</span>
      </div>
    </main>
  </div>

  <footer class="flex h-[26px] items-center whitespace-pre">
    <div class="ml-[4px] flex h-[22px] w-[200px] shrink-0 items-center rounded-[2px] border border-[#adadad] bg-white text-[#6c6c6c]"><svg class="ml-[8px] w-[13px] h-[13px]" viewBox="0 0 13 13" fill="none" stroke="#777"><circle cx="5" cy="5" r="4"/><path d="M8 8l4.500 4.500" stroke-width="1.500"/></svg><span data-w="111" class="ml-[6px]">Szukana fraza (Ctrl+K)</span></div>
    <span data-w="62" class="ml-[968px]">Współrzędne</span>
    <div class="ml-[4px] flex h-[22px] w-[75px] shrink-0 items-center rounded-[2px] border border-[#adadad] bg-white pl-[6px]"><span data-w="61">29.17,75.75</span></div>
    <svg class="ml-[4px] w-4 h-4" viewBox="0 0 16 16"><ellipse cx="6" cy="5" rx="3" ry="4.500" transform="rotate(-35 6 5)" fill="#eee" stroke="#333" stroke-width="1.300"/><ellipse cx="9" cy="10" rx="3" ry="5" transform="rotate(-35 9 10)" fill="#ddd" stroke="#333" stroke-width="1.300"/><path d="M4 7l5-4M6 11l7-4M8 13l5-4M10 3l4-2M1 10l4 1" fill="none" stroke="#333"/></svg>
    <span data-w="24" class="ml-[13px]">Skala</span>
    <div class="ml-[4px] flex h-[22px] w-[80px] shrink-0 items-center rounded-[2px] border border-[#adadad] bg-white pl-px"><span data-w="57">1:16839624</span><svg class="ml-auto w-[19px] h-[20px]" viewBox="0 0 19 20"><path d="M0 0h19v20H0z" fill="#f4f4f4"/><path d="M.5 0v20" stroke="#b0b0b0"/><path d="M5 8h8l-4 4.500z" fill="#555"/></svg></div>
    <svg class="ml-[12px] w-[14px] h-4" viewBox="0 0 14 16"><rect x="1" y="7" width="12" height="8.500" rx="1" fill="#6a6a6a"/><path d="M3.500 7V4.500a3.500 3.500 0 017 0V7" fill="none" stroke="#9a9a9a" stroke-width="1.600"/></svg>
    <span data-w="63" class="ml-[7px]">Powiększenie</span>
    <div class="ml-[4px] flex h-[21px] w-[87px] shrink-0 items-center rounded-[2px] border border-[#adadad] bg-white pl-[4px]"><span data-w="29">100%</span><svg class="ml-auto w-[15px] h-[19px]"><use href="#spin"/></svg></div>
    <span data-w="28" class="ml-[9px]">Obrót</span>
    <div class="ml-[9px] flex h-[21px] w-[84px] shrink-0 items-center rounded-[2px] border border-[#adadad] bg-white pl-[4px]"><span data-w="24">0,0 °</span><svg class="ml-auto w-[15px] h-[19px]"><use href="#spin"/></svg></div>
    <svg class="ml-[6px] w-[13px] h-[13px] shrink-0"><use href="#chk"/></svg>
    <span data-w="44" class="ml-[5px]">Renderuj</span>
    <svg class="ml-[18px] w-4 h-4 shrink-0" viewBox="0 0 16 16"><circle cx="8" cy="8" r="6.500" fill="#c3c3c3" stroke="#aaa" stroke-dasharray="2 1"/><path d="M1.500 2l13 13M14.500 2l-13 13" stroke="#555" stroke-width="1.600"/></svg>
    <svg class="ml-[21px] w-[18px] h-4 shrink-0" viewBox="0 0 18 16"><ellipse cx="9" cy="7" rx="8.500" ry="6.500" fill="#666"/><path d="M9 12l1 4 3-4z" fill="#666"/><path d="M4 7h2M8 7h2M12 7h2" stroke="#fff" stroke-width="2"/></svg>
  </footer>
</div>

<script>
const $ = id => document.getElementById(id);
const NS = c => `<svg class="${c}">`;

/* menu bar: label with underlined accelerator, left edge, width */
const menu = [['Pro<u>j</u>ekt',10,37],['<u>E</u>dycja',61,34],['<u>W</u>idok',109,34],['W<u>a</u>rstwa',157,45],['<u>U</u>stawienia',216,57],['<u>W</u>tyczki',287,41],['Wekt<u>o</u>r',342,38],['<u>R</u>aster',394,32],['<u>B</u>azy danych',440,66],['W <u>i</u>nternecie',520,66],['Siatka',600,31],['Pro<u>c</u>essing',645,57],['<u>P</u>omoc',716,38]];
let x = 0;
$('menu').innerHTML = menu.map(([t, l, w]) => { const s = `<span data-w="${w}" class="underline-offset-2" style="margin-left:${l - x}px">${t}</span>`; x = l + w; return s; }).join('');

/* toolbars: icon name and centre, in pixels from the left edge */
function bar(id, list) {
  let pos = 0;
  $(id).innerHTML = list.split(' ').map(e => {
    const [n, c] = e.split(':'); const w = n === 'grip' ? 5 : n === 'sep' ? 1 : n === 'hand' ? 24 : 16;
    const m = +c - w / 2 - pos; pos = +c + w / 2;
    const st = `style="margin-left:${m}px"`;
    if (n === 'grip') return `<div ${st} class="flex w-[5px] shrink-0 justify-between h-[20px]"><i class="border-l border-dotted border-[#aaa]"></i><i class="border-l border-dotted border-[#aaa]"></i></div>`;
    if (n === 'sep') return `<i ${st} class="w-px h-[12px] shrink-0 bg-[#ccc]"></i>`;
    if (n === 'hand') return `<div ${st} class="flex w-[24px] h-[23px] shrink-0 items-center justify-center rounded-[3px] border border-[#aaa] bg-[#dedede]">${NS('w-4 h-4')}<use href="#hand"/></svg></div>`;
    return `<svg ${st} class="w-4 h-4 shrink-0"><use href="#${n}"/></svg>`;
  }).join('');
}
bar('tb1', 'grip:7 new:25 open:50 save:75 layout:100 layman:125 style:150 grip:173 hand:191 pansel:216 zin:241 zout:266 zfull:292 zsel:316 lens:341 z11:366 zprev:391 znext:416 newmap:441 newbm:467 bm:491 refresh:516 grip:538 ident:557 action:581 dng:600 select:619 dn:637 selval:656 dn:673.5 desel:693 table:718 abacus:743 gear:768 sigma:792.5 measure:818 dn:835.5 tips:855 textann:880 dn:897.5');
bar('tb2', 'grip:7 dsm:25 ngpkg:50 nshp:75 nfeather:100 chip:126 sep:141.5 virt:157 grip:180 edits:198 pencil:222 gsave:247 gpts:274 gvert:299 dn:315.5 gattr:335 gdel:360 cut:385 copy:410 paste:435 undo:460 redo:485 grip:508 lab:525 diag:551 sep:567.5 labp:583 labr:607 sep:624.5 labg:640 labg:665 labg:690 labg:715 labg:740 grip:763 metas:781 grip:804 py:822 grip:845 help:863 grip:886');
bar('btb', 'addl:16 refresh:41 funnel:66 coll:91 info:116');
bar('ltb', 'brush:16 addg:41 eye:66 funnel:91 eps:116 dn:133.5 exp:153 coll:178 rem:203');

/* browser tree: icon, label, width, arrow, level */
const tree = [['fav','Ulubione',48,0],['bm','Zakładki przestrzenne',113,1],['proj','Katalog projektu',87,1],['home','Home',33,1],['folder','C:\\',16,1],['folder','D:\\',16,1],['gpkg','GeoPackage',65,0],['feather','SpatiaLite',51,0],['pg','PostGIS',40,1],['ms','MSSQL',37,0],['ora','Oracle',34,0],['db2','DB2',21,0],['globe','WMS/WMTS',67,0],['globe','XYZ Tiles',47,2],['tile','Google Maps (Standard)',127,0,1],['tile','Google Terain',71,0,1],['tile','OpenStreetMap',82,0,1],['gdark','WCS',25,0],['gwfs','WFS / OGC API - Features',135,0],['gwire','OWS',26,0],['garc','ArcGisMapServer',90,0],['garcf','ArcGisFeatureServer',105,0],['node','GeoNode',50,0]];
$('tree').innerHTML = tree.map(([i, t, w, a, lv]) => `<div class="flex h-[18px] items-center whitespace-pre">
  <span class="flex w-[23px] justify-center shrink-0 pr-[3px]">${a === 1 ? NS('w-2 h-[10px]') + '<use href="#rt"/></svg>' : a === 2 ? '<svg class="w-2 h-[10px] rotate-90"><use href="#rt"/></svg>' : ''}</span>
  <svg class="w-4 h-4 shrink-0 ${lv ? 'ml-[21px] mr-[5px]' : 'mr-[6px]'}"><use href="#${i}"/></svg><span data-w="${w}" class="pt-px">${t}</span></div>`).join('');

/* layer tree: symbol, label, width, kind */
const sym = { d: '<circle cx="8" cy="8" r="2.800" fill="#b5c77d"/>', l: '<path d="M0 8h16" stroke="#f1e25a" stroke-width="1.200" stroke-dasharray="4 1.500"/>', o: '<circle cx="8" cy="8" r="2" fill="#fff" stroke="#f0dc3a" stroke-width="1.800"/>', c: '<rect width="16" height="15" y=".5" fill="#000" stroke="#2f3d1c"/>' };
const lay = [['d','balice_2019_2020_destination',165,1],['l','balice_2019_2020_flights_trajectories',206,1],['o','balice_2019_2020_origin_geom',172,1],['c','ne_10m_admin_0_countries',152,2],['t','Google Maps (Standard)',134,3],['t','Google Terain',79,3],['t','OpenStreetMap',86,3]];
$('layers').innerHTML = lay.map(([s, t, w, k], n) => `<div class="flex items-center whitespace-pre pr-px ${k === 1 ? 'h-[18px]' : 'h-[15px]'} ${n === 0 ? 'bg-[#efefef] pt-px' : ''}">
  <span class="flex w-[23px] shrink-0 justify-center pr-[3px]">${k === 3 ? NS('w-2 h-[10px]') + '<use href="#rt"/></svg>' : ''}</span>
  <svg class="w-[14px] h-[14px] shrink-0"><use href="#${k === 3 ? 'unchk' : 'chk'}"/></svg>
  <svg class="ml-[6px] mr-[6px] w-4 h-4 shrink-0" viewBox="0 0 16 16">${sym[s] || '<use href="#tile"/>'}</svg>
  <span data-w="${w}" class="${k === 3 ? 'italic font-semibold text-[#808080]' : 'font-bold'} ${k === 1 ? 'pt-px' : ''} ${n === 0 ? 'underline underline-offset-1' : ''}">${t}</span>
  <span class="ml-auto flex shrink-0">${k === 1 ? `<svg class="w-[15px] h-[15px] bg-[#f4f4f4] border border-[#d5d5d5] ${n ? 'text-[#777]' : 'text-[#5b86b0]'}"><use href="#fout"/></svg>` : ''}<i class="ml-px h-[12px] w-[3px] bg-[#ddd]"></i></span></div>`).join('');

function fit() {
  document.querySelectorAll('[data-w]').forEach(e => {
    e.style.flexShrink = 0;
    e.style.letterSpacing = '0px';
    const d = +e.dataset.w - e.getBoundingClientRect().width;
    e.style.letterSpacing = d / e.textContent.length + 'px';
  });
}
fit();
addEventListener('load', () => { fit(); requestAnimationFrame(fit); document.fonts.ready.then(fit); setTimeout(fit, 60); });
</script>
</body>
</html>
